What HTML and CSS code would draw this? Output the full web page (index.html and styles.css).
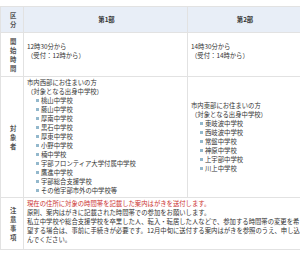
FILE: index.html
```html
<!DOCTYPE html>
<html lang="ja">
<head>
<meta charset="utf-8">
<title>区分</title>
<link rel="stylesheet" href="styles.css">
</head>
<body>
<table class="schedule">
  <colgroup><col class="c-label"><col class="c-part1"><col class="c-part2"></colgroup>
  <thead>
    <tr><th class="label">区分</th><th class="part">第1部</th><th class="part">第2部</th></tr>
  </thead>
  <tbody>
    <tr class="row-time">
      <th class="label">開始時間</th>
      <td><p class="para">12時30分から<br>（受付：12時から）</p></td>
      <td><p class="para">14時30分から<br>（受付：14時から）</p></td>
    </tr>
    <tr>
      <th class="label">対象者</th>
      <td>市内西部にお住まいの方<br>（対象となる出身中学校）
        <ul class="schools">
          <li>桃山中学校</li>
          <li>藤山中学校</li>
          <li>厚南中学校</li>
          <li>黒石中学校</li>
          <li>厚東中学校</li>
          <li>小野中学校</li>
          <li>楠中学校</li>
          <li>宇部フロンティア大学付属中学校</li>
          <li>鷹進中学校</li>
          <li>宇部総合支援学校</li>
          <li>その他宇部市外の中学校等</li>
        </ul>
      </td>
      <td>市内東部にお住まいの方<br>（対象となる出身中学校）
        <ul class="schools">
          <li>東岐波中学校</li>
          <li>西岐波中学校</li>
          <li>常盤中学校</li>
          <li>神原中学校</li>
          <li>上宇部中学校</li>
          <li>川上中学校</li>
        </ul>
      </td>
    </tr>
    <tr>
      <th class="label">注意事項</th>
      <td colspan="2"><p class="para notice"><span class="alert">現在の住所に対象の時間帯を記載した案内はがきを送付します。</span><br>原則、案内はがきに記載された時間帯での参加をお願いします。<br>私立中学校や総合支援学校を卒業した人、転入・転居した人などで、参加する時間帯の変更を希<br>望する場合は、事前に手続きが必要です。12月中旬に送付する案内はがきを参照のうえ、申し込<br>んでください。</p></td>
    </tr>
  </tbody>
</table>
</body>
</html>
```
FILE: styles.css
```css
html, body {
  margin: 0;
  padding: 0;
  background: #fff;
}
body {
  font-family: "Noto Sans CJK JP", "Noto Sans", sans-serif;
  font-size: 6.35px;
  line-height: 9px;
  color: #333;
}
.schedule {
  margin-top: 6px;
  width: 300px;
  table-layout: fixed;
  border-collapse: collapse;
}
.c-label { width: 23px; }
.c-part1 { width: 164px; }
.c-part2 { width: 113px; }
.schedule th,
.schedule td {
  border: 1px solid #e2e2e2;
  vertical-align: middle;
  text-align: left;
  font-weight: normal;
  padding: 1px 1px 2px 3px;
}
.schedule thead th {
  background: #e8eef7;
  font-weight: bold;
}
.schedule th.label {
  padding: 4px 5px 3px 9px;
  font-weight: bold;
  color: #555;
}
.schedule thead th.part {
  text-align: center;
}
.para {
  margin: 0 0 4px;
}
.row-time .para {
  margin-bottom: 7px;
}
.notice {
  white-space: nowrap;
  margin-bottom: 3px;
}
.alert {
  color: #cc3333;
}
.schools {
  list-style: none;
  margin: 0;
  padding: 0 0 0 9px;
}
.schools li::before {
  content: "";
  display: inline-block;
  width: 3px;
  height: 3px;
  background: #93b8cc;
  margin-right: 2px;
  vertical-align: 1px;
}
```
